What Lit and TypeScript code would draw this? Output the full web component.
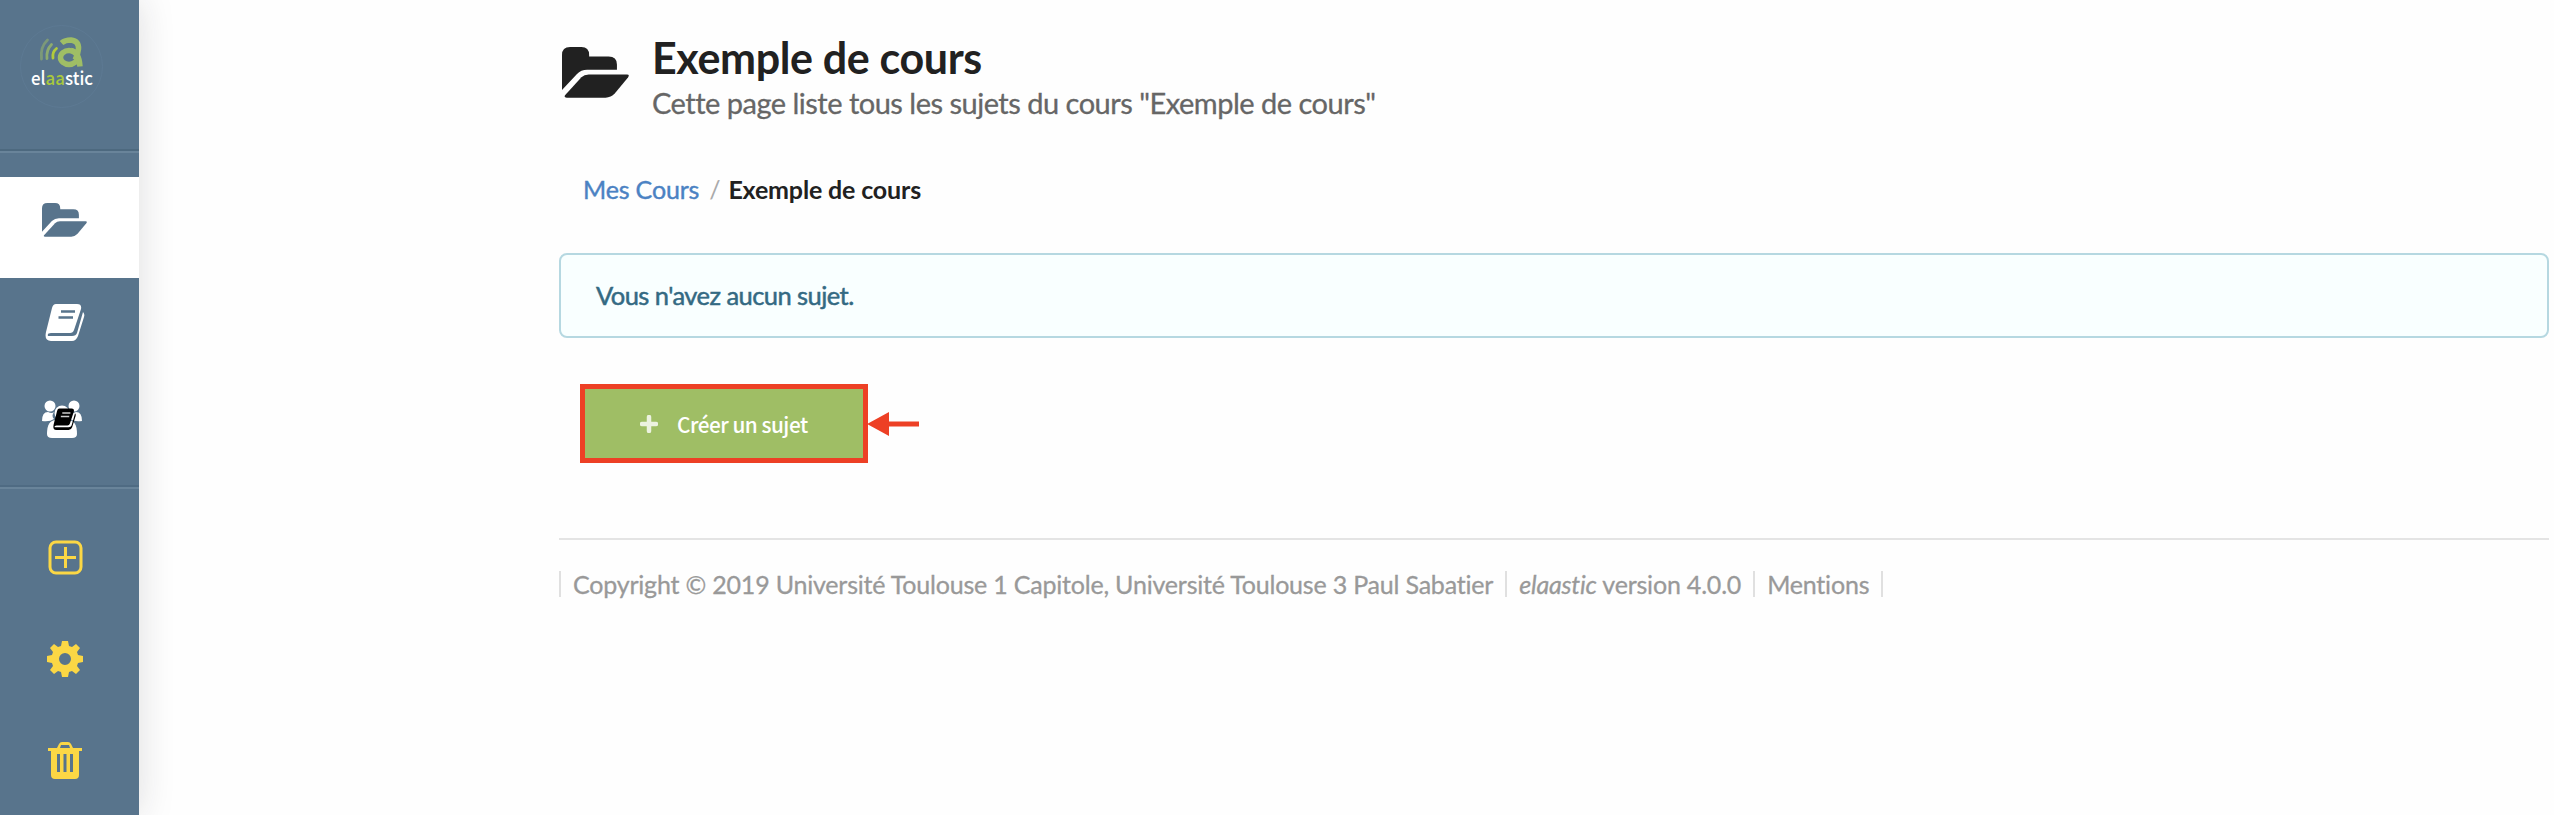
import { LitElement, html, css, svg } from "lit";
import { customElement } from "lit/decorators.js";

const folder = html`<svg class="folder" viewBox="0 0 200 152" preserveAspectRatio="none"><path d="M0 128V24Q0 0 24 0H58Q81 0 81 24V28H139Q164 28 164 52V68H75Q57 68 44 81Z"/><path d="M9 144 58 90Q66 82 80 82H194Q203 82 197 91L158 138Q146 151 130 151H14Q5 151 9 144Z"/></svg>`;

const bookShape = (line: string) => svg`<path fill="currentColor" d="M11 1H32Q37 1 36 6L29 27Q28 30 25 30H6Q2 30 3 33H27Q31 33 32 30L38 9Q40 11 39 14L33 33Q31 38 27 38H6Q-1 38 1 29L7 5Q8 1 11 1Z"/><path d="M16 8.5H30M13.500 14.500H28" fill="none" stroke="${line}" stroke-width="2.600"/>`;

@customElement("app-root")
export class AppRoot extends LitElement {
  static styles = css`
    :host { display: flex; height: 815px; background: #fefefe; font-family: Lato, sans-serif; color: #212121; overflow: hidden; }
    .side { width: 139px; height: 815px; flex: none; background: #58748c; box-shadow: 0 0 34px rgba(34,36,38,.15); color: #fff; }
    .side svg, .main svg { display: block; flex: none; }
    .brand { height: 151px; box-sizing: border-box; padding: 24px 0 0 20px; border-bottom: 2px solid #4d697f; }
    .item { display: flex; box-sizing: border-box; }
    .active { height: 101px; margin-top: 24px; padding: 26px 0 0 42px; background: #fff; color: #58748c; }
    .active .folder { width: 45px; height: 34px; }
    .folder { fill: currentColor; }
    .book { height: 97px; padding: 25px 0 0 45px; }
    .group { height: 112px; padding: 24px 0 0 41px; border-bottom: 2px solid #4f6b83; }
    .rule { height: 2px; background: #69849a; }
    .tools { color: #fbd745; display: flex; flex-direction: column; padding: 49px 0 0 46px; }
    .tools svg { margin-bottom: 64px; }
    .tools svg:nth-child(2) { margin-bottom: 63px; }
    .main { flex: none; width: 1990px; margin-left: 420px; padding-top: 33px; }
    .head { display: flex; height: 91px; }
    .head .folder { width: 67px; height: 51px; margin: 14px 0 0 3px; }
    .titles { margin-left: 23px; white-space: nowrap; }
    h1 { margin: -1px 0 1px; font-size: 43px; line-height: 52px; font-weight: 700; letter-spacing: -.36px; }
    .sub { font-size: 29px; line-height: 36px; color: #666; letter-spacing: -.5px; -webkit-text-stroke: .3px; }
    .crumbs { display: flex; align-items: center; height: 40px; margin: 45px 0 0 24px; font-size: 25px; letter-spacing: -.16px; white-space: nowrap; }
    .crumbs a { color: #4b82c3; -webkit-text-stroke: .4px; }
    .crumbs i { font-style: normal; color: #aaa; margin: 0 8px 0 10px; }
    .crumbs b { letter-spacing: -.16px; }
    .msg { box-sizing: border-box; height: 85px; margin-top: 44px; border: 2px solid #b6d8e1; border-radius: 8px; background: #f9ffff; color: #346a83; display: flex; align-items: center; padding: 0 0 2px 35px; font-size: 25.5px; letter-spacing: -.56px; -webkit-text-stroke: .5px; }
    .action { display: flex; align-items: center; margin: 46px 0 0 21px; }
    .btn { box-sizing: border-box; width: 288px; height: 79px; border: 5px solid #ed4025; background: #9fbe65; color: #fff; display: flex; align-items: center; padding-left: 55px; font: 500 20.8px "Noto Sans CJK SC", sans-serif; letter-spacing: -.5px; white-space: nowrap; }
    .btn svg { margin-right: 19px; }
    footer { margin-top: 75px; border-top: 2px solid #e4e4e4; padding-top: 31px; display: flex; font-size: 25px; letter-spacing: -.2px; color: #999; -webkit-text-stroke: .3px; white-space: nowrap; }
    footer span { border-right: 2px solid #e0e0e0; height: 26px; line-height: 26px; padding: 0 12px; }
    footer span:first-child { border-left: 2px solid #e0e0e0; }
    .word { font: 500 18.500px "Noto Sans CJK SC", sans-serif; }
  `;

  render() {
    return html`
      <nav class="side">
        <div class="brand">
          <svg width="84" height="86" viewBox="20 24 84 86">
            <circle cx="61.5" cy="66.500" r="41" fill="none" stroke="#5e7b95" stroke-width=".7"/>
            <g fill="none" stroke="#9fbe65" stroke-width="2.800" stroke-linecap="round">
              <path d="M41.500 59Q40 47 47.500 40" opacity=".5"/><path d="M47 58.500Q46 50 51.500 44.500" opacity=".75"/><path d="M53 58Q52 52 56.500 48.500" stroke="#b2cb3c"/>
            </g>
            <g fill="none" stroke="#9fbe65" stroke-width="5.500"><path d="M61.500 43Q65 40 71 40Q79 41 78.500 49Q78 55 75 60"/><ellipse cx="69" cy="57.500" rx="8.500" ry="7"/><path d="M71 50.500Q79 52 80 66.500"/></g>
            <text class="word" x="31" y="85" textLength="62" lengthAdjust="spacingAndGlyphs" fill="#fff">el<tspan fill="#a8c83c">aa</tspan>stic</text>
          </svg>
        </div>
        <div class="rule"></div>
        <div class="item active">${folder}</div>
        <div class="item book"><svg width="41" height="39" viewBox="0 0 41 39">${bookShape("#58748c")}</svg></div>
        <div class="item group">
          <svg width="42" height="40" viewBox="0 0 42 40"><g fill="#fff"><circle cx="9" cy="7" r="5.500"/><circle cx="33" cy="7" r="5.500"/><path d="M1 22Q1 13 7 13Q11 15 13 13Q10 17 13 20Q9 23 1 22ZM41 22Q41 13 35 13Q31 15 29 13Q32 17 29 20Q33 23 41 22Z"/><circle cx="21" cy="14" r="7.500"/><path d="M6 35Q6 21 15 21H27Q36 21 36 35Q36 39 31 39H11Q6 39 6 35Z"/></g><g color="#000" transform="translate(12 9) scale(.58)">${bookShape("#ccc")}</g></svg>
        </div>
        <div class="rule"></div>
        <div class="tools">
          <svg width="38" height="38" viewBox="0 0 38 38" fill="none" stroke="currentColor" stroke-width="3"><rect x="4" y="4" width="31" height="31" rx="6"/><path d="M19.500 9V30M9 19.500H30"/></svg>
          <svg width="38" height="38" viewBox="0 0 38 38"><path fill="currentColor" fill-rule="evenodd" d="M16 1H22L23 6 26 7 30 4 34 8 31 12 32 15 37 16V22L32 23 31 26 34 30 30 34 26 31 23 32 22 37H16L15 32 12 31 8 34 4 30 7 26 6 23 1 22V16L6 15 7 12 4 8 8 4 12 7 15 6ZM19 13A6 6 0 1 0 19 25A6 6 0 1 0 19 13Z"/></svg>
          <svg width="38" height="38" viewBox="0 0 38 38" fill="currentColor"><path fill-rule="evenodd" d="M2 7H11L13 3Q14 1 16 1H22Q24 1 25 3L27 7H36V10H33V34Q33 38 29 38H9Q5 38 5 34V10H2ZM14 7H24L23 4H15ZM11 13V31H14V13ZM17.500 13V31H20.500V13ZM24 13V31H27V13Z"/></svg>
        </div>
      </nav>
      <main class="main">
        <div class="head">${folder}<div class="titles"><h1>Exemple de cours</h1><div class="sub">Cette page liste tous les sujets du cours "Exemple de cours"</div></div></div>
        <div class="crumbs"><a>Mes Cours</a><i>/</i><b>Exemple de cours</b></div>
        <div class="msg">Vous n'avez aucun sujet.</div>
        <div class="action">
          <div class="btn"><svg width="18" height="18" viewBox="0 0 18 18"><path d="M9 2V16M2 9H16" stroke="#ecf2e0" stroke-width="4.500" stroke-linecap="round"/></svg>Créer un sujet</div>
          <svg width="51" height="24" viewBox="0 0 51 24" fill="#ed4025"><path d="M-1 12 21 0V9.500H51V14.500H21V24Z"/></svg>
        </div>
        <footer><span>Copyright © 2019 Université Toulouse 1 Capitole, Université Toulouse 3 Paul Sabatier</span><span><em>elaastic</em> version 4.0.0</span><span>Mentions</span></footer>
      </main>`;
  }
}
